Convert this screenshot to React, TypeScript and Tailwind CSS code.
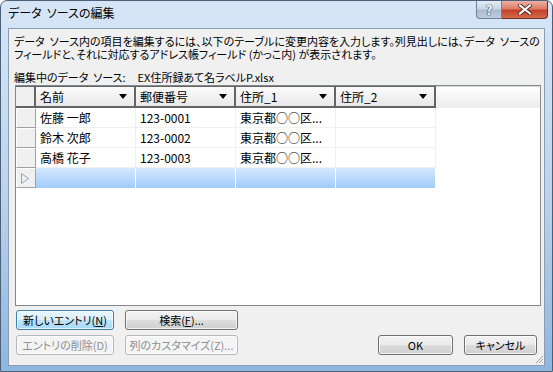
import React from "react";

const jp = "font-['Noto_Sans_CJK_JP',sans-serif] [font-feature-settings:'palt']";

const columns = ["名前", "郵便番号", "住所_1", "住所_2"];

const rows = [
  ["佐藤 一郎", "123-0001", "東京都○○区...", ""],
  ["鈴木 次郎", "123-0002", "東京都○○区...", ""],
  ["高橋 花子", "123-0003", "東京都○○区...", ""],
];

function HeaderCell({ label }: { label: string }) {
  return (
    <div className="w-[100px] h-full flex items-center justify-between pl-[4px] pr-[7px] border-t border-r-2 border-b-2 border-[#646464] bg-gradient-to-b from-[#fbfbfb] to-[#e8e8e8]">
      <span className="leading-none">{label}</span>
      <svg width="8" height="5" viewBox="0 0 8 5">
        <path d="M0 0h8L4 5z" fill="#000" />
      </svg>
    </div>
  );
}

function Btn({
  children,
  w,
  kind = "normal",
}: {
  children: React.ReactNode;
  w: string;
  kind?: "normal" | "focus" | "disabled";
}) {
  const look =
    kind === "focus"
      ? "border-[#3c7fb1] bg-[linear-gradient(#eaf6fd_0%,#d9f0fc_50%,#bee6fd_50%,#a7d9f5_100%)] text-black"
      : kind === "disabled"
        ? "border-[#b5b9bc] bg-[#f4f4f4] text-[#8d8d8d]"
        : "border-[#707070] bg-[linear-gradient(#f2f2f2_0%,#ebebeb_50%,#dddddd_50%,#cfcfcf_100%)] text-black";
  return (
    <div
      className={`${w} h-[20px] rounded-[3px] border flex items-center justify-center whitespace-nowrap text-[11px] leading-none shadow-[inset_0_0_0_1px_rgba(255,255,255,0.7)] ${look}`}
    >
      {children}
    </div>
  );
}

export default function App() {
  return (
    <div className={`w-[553px] h-[372px] flex flex-col rounded-t-[7px] border border-[#4d6079] bg-gradient-to-b from-[#d6e6f7] via-[#bed4ed] to-[#8fb6de] text-black ${jp}`}>
      {/* title bar */}
      <div className="h-[27px] flex items-start justify-between pl-[7px] pr-[4px]">
        <div className="pt-[4px] text-[12px] leading-[16px] text-black whitespace-pre">データ  ソースの編集</div>
        <div className="flex">
          <div className="w-[26px] h-[18px] rounded-bl-[4px] border border-t-0 border-[#6f8196] bg-[linear-gradient(#e4ecf5_0%,#c9d6e5_45%,#a9bbd0_55%,#bccde0_100%)] flex items-center justify-center">
            <span className="text-[13px] font-bold leading-none text-white [text-shadow:0_0_1px_#2b3f57,0_0_1px_#2b3f57,0_0_1px_#2b3f57]">?</span>
          </div>
          <div className="w-[46px] h-[18px] rounded-br-[4px] border border-l-0 border-t-0 border-[#6d2f24] bg-[linear-gradient(#eab2a5_0%,#dc7c66_45%,#c4412a_55%,#d46a4b_100%)] flex items-center justify-center">
            <svg width="14" height="11" viewBox="0 0 14 11">
              <path d="M2 1.5l10 8M12 1.5l-10 8" stroke="#3a1a14" strokeWidth="3.6" strokeLinecap="square" />
              <path d="M2 1.5l10 8M12 1.5l-10 8" stroke="#fff" strokeWidth="2.2" strokeLinecap="square" />
            </svg>
          </div>
        </div>
      </div>

      {/* client area */}
      <div className="mx-[7px] h-[338px] border border-[#8b9db3] bg-[#f0f0f0] flex flex-col px-[5px] pt-[6px] text-[11px] leading-[13px]">
        <div className="whitespace-pre">データ  ソース内の項目を編集するには、以下のテーブルに変更内容を入力します。列見出しには、データ  ソースの</div>
        <div className="whitespace-pre">フィールドと、それに対応するアドレス帳フィールド (かっこ内) が表示されます。</div>
        <div className="mt-[10px] whitespace-pre flex gap-[12px]">
          <span>編集中のデータ  ソース:</span>
          <span>EX住所録あて名ラベルP.xlsx</span>
        </div>

        {/* grid */}
        <div className="mt-[1px] ml-[1px] w-[526px] h-[226px] border border-[#828790] bg-white flex flex-col overflow-hidden text-[12px]">
          <div className="h-[22px] flex shrink-0 bg-gradient-to-b from-[#ffffff] to-[#ececec]">
            <div className="w-[20px] h-full border-t border-r-2 border-b-2 border-[#646464] bg-[#f0f0f0]" />
            {columns.map((c) => (
              <HeaderCell key={c} label={c} />
            ))}
            <div className="flex-1 border-t border-[#d8d8d8]" />
          </div>
          {rows.map((r, i) => (
            <div key={i} className="h-[20px] flex shrink-0">
              <div className="w-[20px] h-full bg-[#f0f0f0] border-t border-l border-white border-r border-b border-r-[#a0a0a0] border-b-[#a0a0a0]" />
              {r.map((v, j) => (
                <div key={j} className="w-[100px] h-full border-r border-b border-[#f0f0f0] pl-[4px] flex items-center whitespace-nowrap">
                  {v}
                </div>
              ))}
            </div>
          ))}
          <div className="h-[20px] flex shrink-0">
            <div className="w-[20px] h-full bg-[#f0f0f0] border-t border-l border-white border-r border-b border-r-[#a0a0a0] border-b-[#a0a0a0] flex items-center pl-[4px]">
              <svg width="8" height="11" viewBox="0 0 8 11">
                <path d="M0.5 0.5v10l7-5z" fill="none" stroke="#8ea3c4" />
              </svg>
            </div>
            {columns.map((c) => (
              <div key={c} className="w-[100px] h-full border-r border-white bg-gradient-to-b from-[#d3e8fe] to-[#a2cbf8]" />
            ))}
          </div>
        </div>

        {/* buttons */}
        <div className="mt-[4px] flex justify-between pr-[1px]">
          <div className="flex flex-col gap-[5px] pl-[2px]">
            <div className="flex gap-[11px]">
              <Btn w="w-[98px]" kind="focus">
                新しいエントリ(<span className="underline">N</span>)
              </Btn>
              <Btn w="w-[113px]">
                検索(<span className="underline">F</span>)...
              </Btn>
            </div>
            <div className="flex gap-[11px]">
              <Btn w="w-[98px]" kind="disabled">エントリの削除(D)</Btn>
              <Btn w="w-[113px]" kind="disabled">列のカスタマイズ(Z)...</Btn>
            </div>
          </div>
          <div className="flex items-end gap-[11px] pr-[1px]">
            <Btn w="w-[75px]">OK</Btn>
            <Btn w="w-[73px]">キャンセル</Btn>
          </div>
        </div>
        <div className="flex-1 flex items-end justify-end -mr-[5px]">
          <svg width="9" height="9" viewBox="0 0 9 9" className="mb-[1px]">
            <path d="M8 1L1 8M8 4L4 8M8 7L7 8" stroke="#a0a0a0" />
          </svg>
        </div>
      </div>
    </div>
  );
}
